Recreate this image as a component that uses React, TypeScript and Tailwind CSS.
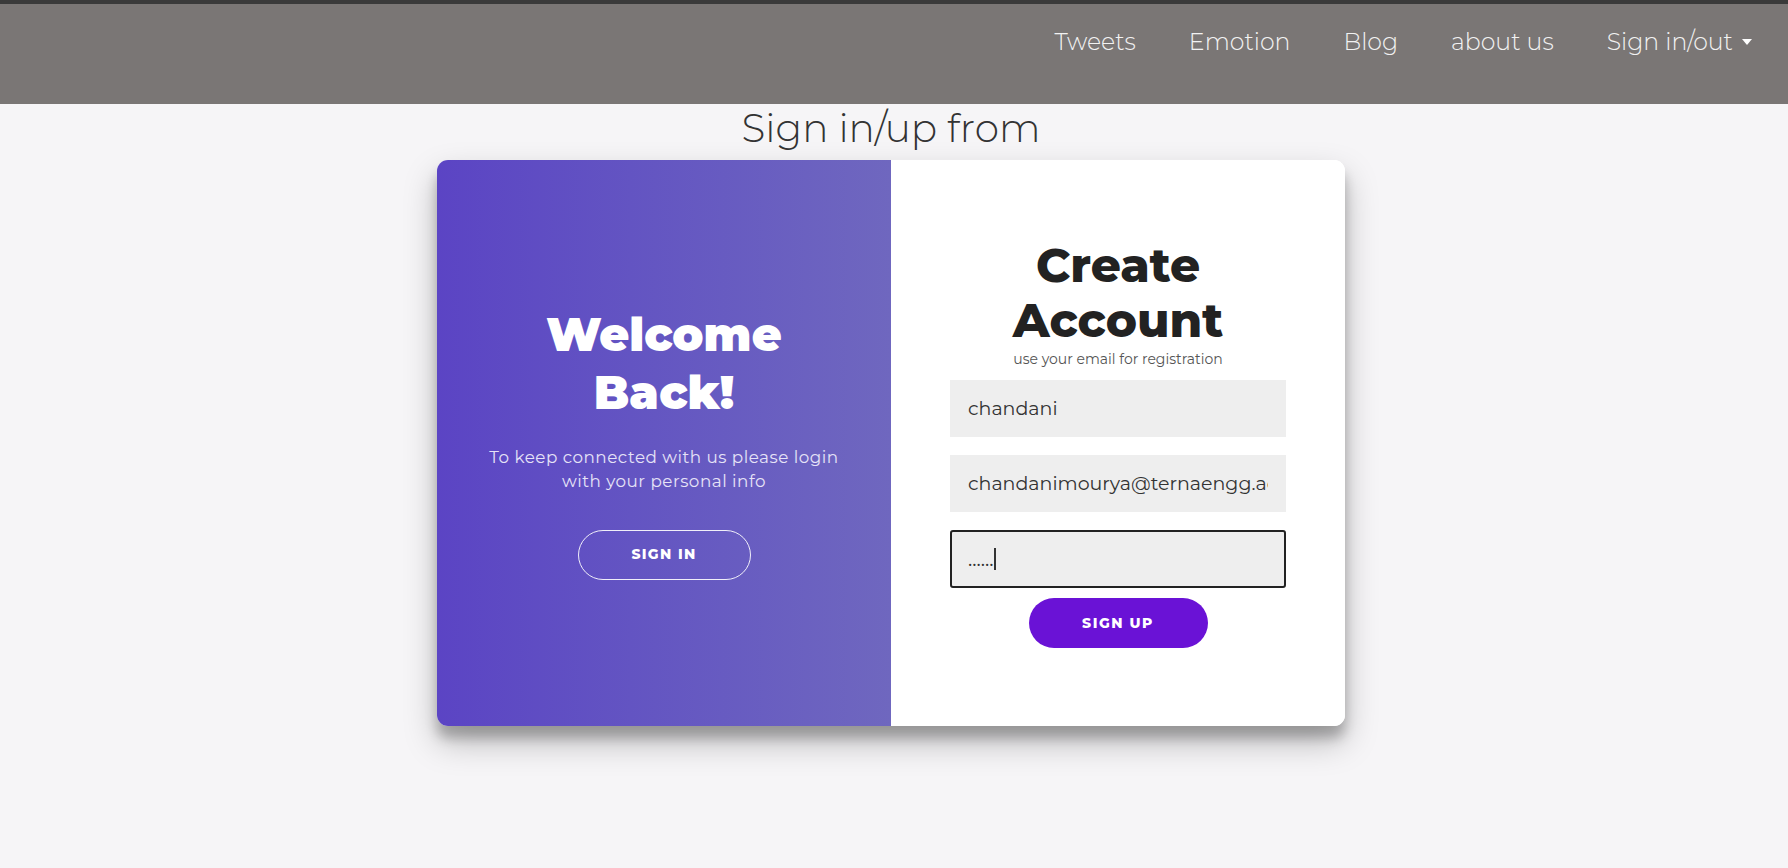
import React from 'react';

const navLinks = ['Tweets', 'Emotion', 'Blog', 'about us'];

export default function App() {
    return (
        <div className="min-h-screen w-full bg-[#f6f5f7] font-['Montserrat','DejaVu_Sans',sans-serif] text-[#333]">
            {/* Top strip + navbar */}
            <div className="h-[4px] bg-[#3a3a3a]" />
            <nav className="h-[100px] bg-[#7a7675] flex justify-end pt-[23px] pr-[36px]">
                <ul className="flex items-start gap-[53px] h-[30px] text-[23.6px] leading-[30px] text-[#f2f2f2] font-light">
                    {navLinks.map((link) => (
                        <li key={link}>{link}</li>
                    ))}
                    <li className="flex items-center gap-[9px]">
                        Sign in/out
                        <span className="inline-block w-0 h-0 border-t-[6px] border-t-white border-x-[5px] border-x-transparent" />
                    </li>
                </ul>
            </nav>

            {/* Heading */}
            <h2 className="pr-[6px] text-center text-[39px] leading-[48px] font-light text-[#333]">Sign in/up from</h2>

            {/* Card */}
            <div className="mt-[8px] flex justify-center pr-[6px]">
                <div className="w-[908px] h-[566px] rounded-[11px] overflow-hidden grid grid-cols-2 bg-white shadow-[0_16px_33px_rgba(0,0,0,0.25),0_12px_12px_rgba(0,0,0,0.22)]">
                    {/* Left overlay panel */}
                    <div className="bg-linear-to-r from-[#5b44c4] to-[#6f67bf] flex flex-col items-center justify-center text-center px-[40px] text-white">
                        <h1 className="text-[46px] leading-[58px] font-black">
                            Welcome
                            <br />
                            Back!
                        </h1>
                        <p className="mt-[24px] mb-[36px] text-[16.8px] leading-[23.6px] tracking-[0.5px] text-[#e6e3f7]">
                            To keep connected with us please login with your personal info
                        </p>
                        <button className="w-[173px] h-[50px] rounded-full border border-white/90 text-[14px] font-extrabold tracking-[1.3px] uppercase">
                            Sign In
                        </button>
                    </div>

                    {/* Sign up form */}
                    <form className="bg-white flex flex-col items-center justify-center text-center px-[59px]">
                        <h1 className="text-[47px] leading-[55px] font-extrabold text-[#222]">
                            Create
                            <br />
                            Account
                        </h1>
                        <span className="mt-[3px] mb-[4px] text-[14px] leading-[16px] text-[#555]">use your email for registration</span>
                        <input
                            type="text"
                            readOnly
                            value="chandani"
                            className="my-[9px] w-full h-[57px] bg-[#eee] px-[18px] text-[19px] text-[#333] outline-none"
                        />
                        <input
                            type="email"
                            readOnly
                            value="chandanimourya@ternaengg.ac.in"
                            className="my-[9px] w-full h-[57px] bg-[#eee] px-[18px] text-[19px] text-[#333] outline-none"
                        />
                        {/* focused password field */}
                        <div className="my-[9px] w-full h-[58px] bg-[#eee] border-2 border-[#222] rounded-[3px] px-[16px] flex items-center">
                            <span className="text-[20px] text-[#333] leading-none">......</span>
                            <span className="ml-[1px] w-[1.5px] h-[22px] bg-[#333]" />
                        </div>
                        <button
                            type="button"
                            className="mt-[1px] w-[179px] h-[50px] rounded-full bg-[#6a12d6] text-white text-[14px] font-extrabold tracking-[1.5px] uppercase"
                        >
                            Sign Up
                        </button>
                    </form>
                </div>
            </div>
        </div>
    );
}
